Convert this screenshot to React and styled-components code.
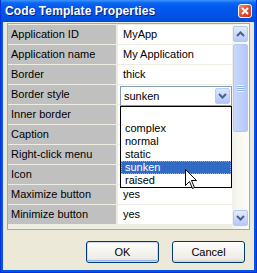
import React from 'react'
import styled, { createGlobalStyle, css } from 'styled-components'

const GlobalStyle = createGlobalStyle`
    body {
        margin: 0;
        font-family: "Liberation Sans", Arial, sans-serif;
        font-size: 11px;
        color: #000;
    }
    * { box-sizing: border-box; }
`

const properties = [
    { label: 'Application ID', value: 'MyApp' },
    { label: 'Application name', value: 'My Application' },
    { label: 'Border', value: 'thick' },
    { label: 'Border style', value: 'sunken', combo: true },
    { label: 'Inner border', value: '' },
    { label: 'Caption', value: '' },
    { label: 'Right-click menu', value: '' },
    { label: 'Icon', value: '' },
    { label: 'Maximize button', value: 'yes' },
    { label: 'Minimize button', value: 'yes' },
]

const options = ['complex', 'normal', 'static', 'sunken', 'raised']

const Chevron = ({ up }) => (
    <svg width="9" height="6" viewBox="0 0 9 6">
        <path
            d={up ? 'M1 5 L4.5 1.5 L8 5' : 'M1 1 L4.5 4.5 L8 1'}
            fill="none"
            stroke="#4D6185"
            strokeWidth="2"
        />
    </svg>
)

const Cursor = () => (
    <svg width="13" height="21" viewBox="0 0 13 21">
        <path
            d="M0.5 0.5 L0.5 16.5 L4.5 12.5 L7.5 19.5 L9.5 18.5 L6.5 11.5 L11.5 11.5 Z"
            fill="#fff"
            stroke="#000"
            strokeWidth="1"
            strokeLinejoin="miter"
        />
    </svg>
)

const App = () => {
    return (
        <>
            <GlobalStyle />
            <Window>
                <TitleBar>
                    <Title>Code Template Properties</Title>
                    <CloseButton>
                        <svg width="8" height="8" viewBox="0 0 8 8">
                            <path d="M1 1 L7 7 M7 1 L1 7" stroke="#fff" strokeWidth="2" />
                        </svg>
                    </CloseButton>
                </TitleBar>
                <Client>
                    <Grid>
                        <Rows>
                            {properties.map((p) => (
                                <Row key={p.label}>
                                    <Label>{p.label}</Label>
                                    <Value>
                                        {p.combo ? (
                                            <Combo>
                                                <span>{p.value}</span>
                                                <DropButton>
                                                    <Chevron />
                                                </DropButton>
                                                <DropList>
                                                    {options.map((o) => (
                                                        <Option key={o} selected={o === p.value}>
                                                            {o}
                                                        </Option>
                                                    ))}
                                                    <CursorWrap>
                                                        <Cursor />
                                                    </CursorWrap>
                                                </DropList>
                                            </Combo>
                                        ) : (
                                            p.value
                                        )}
                                    </Value>
                                </Row>
                            ))}
                        </Rows>
                        <Scrollbar>
                            <ScrollButton>
                                <Chevron up />
                            </ScrollButton>
                            <Track>
                                <Thumb>
                                    <Grip />
                                </Thumb>
                            </Track>
                            <ScrollButton>
                                <Chevron />
                            </ScrollButton>
                        </Scrollbar>
                    </Grid>
                    <Buttons>
                        <Button primary>OK</Button>
                        <Button>Cancel</Button>
                    </Buttons>
                </Client>
            </Window>
        </>
    )
}

export default App

const Window = styled.div`
    width: 257px;
    height: 273px;
    background: #0055E5;
    border-left: 1px solid #0831D9;
    border-right: 1px solid #0831D9;
    border-bottom: 1px solid #0831D9;
    display: flex;
    flex-direction: column;
`

const TitleBar = styled.div`
    height: 22px;
    flex-shrink: 0;
    display: flex;
    align-items: center;
    padding-left: 4px;
    background: linear-gradient(to bottom, #3D95FF 0, #0A66F2 3px, #0058EE 8px, #0055E8 60%, #004DDC 100%);
`

const Title = styled.div`
    color: #fff;
    font-weight: bold;
    font-size: 12px;
    letter-spacing: 0.1px;
    text-shadow: 1px 1px 0 #0A1E80;
`

const CloseButton = styled.div`
    margin-left: auto;
    margin-right: 4px;
    width: 14px;
    height: 14px;
    border: 1px solid #fff;
    border-radius: 3px;
    background: linear-gradient(135deg, #F08C6E 0, #E0502E 50%, #C8381A 100%);
    display: flex;
    align-items: center;
    justify-content: center;
`

const Client = styled.div`
    flex: 1;
    margin: 0 2px 2px;
    background: #ECE9D8;
    padding: 1px 4px 0 4px;
    display: flex;
    flex-direction: column;
`

const Grid = styled.div`
    height: 207px;
    border: 1px solid #A9A796;
    display: flex;
    background: #fff;
`

const Rows = styled.div`
    flex: 1;
    background: #EEEDE3;
    padding-top: 1px;
`

const Row = styled.div`
    display: grid;
    grid-template-columns: 108px 1fr;
    column-gap: 2px;
    height: 19px;
    margin-bottom: 1px;
    line-height: 19px;
`

const Label = styled.div`
    background: #C0C0C0;
    padding-left: 3px;
    white-space: nowrap;
`

const Value = styled.div`
    background: #fff;
    padding-left: 5px;
    position: relative;
`

const Combo = styled.div`
    position: absolute;
    z-index: 2;
    left: 2px;
    top: 1px;
    width: 112px;
    height: 20px;
    border: 1px solid #7F9DB9;
    background: #fff;
    display: flex;
    align-items: center;
    padding-left: 3px;
    line-height: 18px;
`

const DropButton = styled.div`
    margin-left: auto;
    margin-right: 1px;
    width: 15px;
    height: 16px;
    border-radius: 2px;
    border: 1px solid #B9CCF5;
    background: linear-gradient(to bottom, #DCE7FD 0, #C2D4FB 60%, #AFC5F8 100%);
    display: flex;
    align-items: center;
    justify-content: center;
`

const DropList = styled.div`
    position: absolute;
    top: 19px;
    left: -1px;
    width: 112px;
    border: 1px solid #000;
    background: #fff;
    padding: 15px 0 0;
    height: 82px;
`

const Option = styled.div`
    height: 13px;
    line-height: 13px;
    padding-left: 3px;
    border: 1px solid transparent;
    display: flex;
    align-items: center;

    ${(props) => props.selected && css`
        background: #316AC5;
        color: #fff;
        border: 1px dotted #E8A040;
    `}
`

const CursorWrap = styled.div`
    position: absolute;
    left: 64px;
    top: 62px;
    line-height: 0;
`

const Scrollbar = styled.div`
    width: 17px;
    background: linear-gradient(to right, #F3F1EA, #FDFDFA);
    display: flex;
    flex-direction: column;
    padding: 2px 1px 3px 1px;
    gap: 1px;
`

const ScrollButton = styled.div`
    height: 16px;
    border-radius: 2px;
    border: 1px solid #B4C8F6;
    background: linear-gradient(to bottom, #E3ECFE 0, #C6D6FC 60%, #B5CAF8 100%);
    display: flex;
    align-items: center;
    justify-content: center;
`

const Track = styled.div`
    flex: 1;
    padding-top: 1px;
`

const Thumb = styled.div`
    height: 88px;
    border-radius: 2px;
    border: 1px solid #B4C8F6;
    background: linear-gradient(to right, #C9D8FC 0, #BFD1FB 50%, #B4C8F6 100%);
    display: flex;
    align-items: center;
    justify-content: center;
`

const Grip = styled.div`
    width: 7px;
    height: 7px;
    background: repeating-linear-gradient(to bottom, #EEF4FE 0, #EEF4FE 1px, #8CB0F8 1px, #8CB0F8 2px);
`

const Buttons = styled.div`
    display: flex;
    justify-content: flex-end;
    gap: 13px;
    margin-top: 11px;
    padding-right: 5px;
`

const Button = styled.button`
    width: 73px;
    height: 22px;
    font-family: "Liberation Sans", Arial, sans-serif;
    font-size: 11px;
    color: #000;
    border: 1px solid #003C74;
    border-radius: 3px;
    background: linear-gradient(to bottom, #FFFFFF 0, #F6F5F0 40%, #ECEBE4 85%, #D6D0C5 100%);
    padding: 0;

    ${(props) => props.primary && css`
        box-shadow: inset 0 0 0 1px #C9D8FA, inset 0 -1px 0 1px #97B4F0;
    `}
`
